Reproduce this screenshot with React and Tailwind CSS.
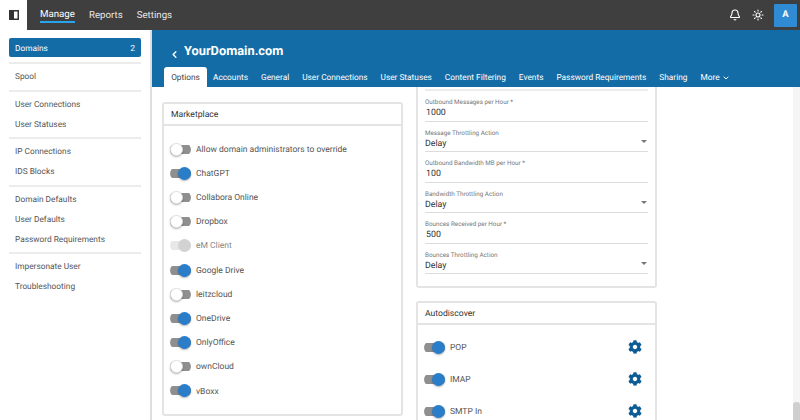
import { Bell, ChevronDown, ChevronLeft, Sun } from "lucide-react";
import { FaCog } from "react-icons/fa";

const sideGroups = [
  ["Spool"],
  ["User Connections", "User Statuses"],
  ["IP Connections", "IDS Blocks"],
  ["Domain Defaults", "User Defaults", "Password Requirements"],
  ["Impersonate User", "Troubleshooting"],
];

const tabs = ["Accounts", "General", "User Connections", "User Statuses", "Content Filtering", "Events", "Password Requirements", "Sharing"];

const marketplace = [
  ["Allow domain administrators to override", "off"],
  ["ChatGPT", "on"],
  ["Collabora Online", "off"],
  ["Dropbox", "off"],
  ["eM Client", "disabled"],
  ["Google Drive", "on"],
  ["leitzcloud", "off"],
  ["OneDrive", "on"],
  ["OnlyOffice", "on"],
  ["ownCloud", "off"],
  ["vBoxx", "on"],
];

const fields = [
  ["Outbound Messages per Hour *", "1000", false],
  ["Message Throttling Action", "Delay", true],
  ["Outbound Bandwidth MB per Hour *", "100", false],
  ["Bandwidth Throttling Action", "Delay", true],
  ["Bounces Received per Hour *", "500", false],
  ["Bounces Throttling Action", "Delay", true],
];

const Toggle = ({ state }) => {
  if (state === "on") {
    return (
      <div className="flex h-[13px] w-[21px] shrink-0 items-center justify-end rounded-full bg-[linear-gradient(#8f8f8f,#8f8f8f)] bg-[length:100%_9px] bg-center bg-no-repeat">
        <div className="h-[13px] w-[13px] rounded-full bg-[#2a7dc9] shadow-[0_1px_2px_rgba(0,0,0,0.3)]" />
      </div>
    );
  }
  if (state === "disabled") {
    return (
      <div className="flex h-[13px] w-[21px] shrink-0 items-center justify-end rounded-full bg-[linear-gradient(#e8e8e8,#e8e8e8)] bg-[length:100%_9px] bg-center bg-no-repeat">
        <div className="h-[13px] w-[13px] rounded-full bg-[#d2d2d2]" />
      </div>
    );
  }
  return (
    <div className="flex h-[13px] w-[21px] shrink-0 items-center justify-start rounded-full bg-[linear-gradient(#8f8f8f,#8f8f8f)] bg-[length:100%_9px] bg-center bg-no-repeat">
      <div className="h-[13px] w-[13px] rounded-full border border-[#e2e2e2] bg-white shadow-[0_1px_2px_rgba(0,0,0,0.3)]" />
    </div>
  );
};

const Card = ({ title, children, className = "" }) => (
  <div className={`rounded-[3px] border-2 border-[#e4e4e4] bg-white ${className}`}>
    <div className="flex h-[22px] items-center border-b-2 border-[#e4e4e4] px-[7px] pt-[3px] text-[8.6px] text-[#333]">{title}</div>
    {children}
  </div>
);

export default function App() {
  return (
    <div className="flex h-[420px] w-[800px] flex-col overflow-hidden bg-white font-['Roboto',sans-serif] [text-rendering:geometricPrecision]">
      <header className="flex h-[30px] shrink-0">
        <div className="flex w-[27px] items-center justify-center bg-white">
          <svg width="10" height="10" viewBox="0 0 10 10">
            <rect x="0.75" y="0.75" width="8.5" height="8.5" fill="none" stroke="#333" strokeWidth="1.5" />
            <rect x="0" y="0" width="5" height="10" fill="#333" />
          </svg>
        </div>
        <div className="flex flex-1 items-center bg-[#3f3f3f] pl-[13px] pr-[3px] text-[9.7px] text-[#e8e8e8]">
          <span className="border-b-2 border-[#29a3ee] pt-[2px] leading-[12px] text-white">Manage</span>
          <span className="ml-[14px] pt-[2px]">Reports</span>
          <span className="ml-[14px] pt-[2px]">Settings</span>
          <div className="ml-auto flex items-center">
            <Bell size={12} strokeWidth={2.2} className="text-white" />
            <Sun size={12} strokeWidth={2.2} className="ml-[11px] text-white" />
            <div className="ml-[10px] flex h-[23px] w-[23px] items-center justify-center rounded-[1px] bg-[#2f8bd3] text-[9.5px] font-bold text-white">A</div>
          </div>
        </div>
      </header>

      <div className="flex min-h-0 flex-1">
        <aside className="flex w-[152px] shrink-0 flex-col border-r-2 border-[#dedede] px-[9px] pt-[8px] text-[8.3px] text-[#555]">
          <div className="mb-[3px] flex h-[19px] items-center justify-between rounded-[2px] bg-[#146ca6] px-[6px] pt-[3px] text-white">
            <span>Domains</span>
            <span className="text-[8.5px]">2</span>
          </div>
          {sideGroups.map((group, i) => (
            <div key={i} className="mt-[2px] border-t-2 border-[#ececec] pb-[0.5px] pt-[3px]">
              {group.map((item) => (
                <div key={item} className="flex h-[20px] items-center px-[6px] pt-[1px]">{item}</div>
              ))}
            </div>
          ))}
        </aside>

        <div className="flex min-w-0 flex-1 flex-col">
          <div className="h-[57px] shrink-0 bg-[#146ca6] text-white">
            <div className="flex h-[37px] items-end pb-[7px] pl-[17px]">
              <ChevronLeft size={11} strokeWidth={3} />
              <span className="ml-[4px] text-[12.8px] font-bold leading-[16px]">YourDomain.com</span>
            </div>
            <div className="flex h-[20px] items-center gap-[13px] pl-[12px] text-[8.3px]">
              <div className="-mr-[7px] flex h-[20px] w-[43px] items-center justify-center rounded-t-[3px] bg-white pt-[3px] text-[#444]">Options</div>
              {tabs.map((tab) => (
                <span key={tab} className="pt-[3px]">{tab}</span>
              ))}
              <span className="flex items-center gap-[2px] pt-[2px]">More <ChevronDown size={8} strokeWidth={3} /></span>
            </div>
          </div>

          <div className="flex min-h-0 flex-1">
            <main className="flex flex-1 items-start gap-[13px] overflow-hidden pl-[10px]">
              <Card title="Marketplace" className="mt-[15px] w-[241px]">
                <div className="flex flex-col px-[6px] pb-[11px] pt-[11px]">
                  {marketplace.map(([name, state]) => (
                    <div key={name} className="flex h-[24.2px] items-center gap-[5px] text-[8.5px] text-[#555]">
                      <Toggle state={state} />
                      <span className={state === "disabled" ? "pt-[2px] text-[#888]" : "pt-[2px]"}>{name}</span>
                    </div>
                  ))}
                </div>
              </Card>

              <div className="flex w-[241px] flex-col">
                <div className="rounded-b-[3px] border-x-2 border-b-2 border-[#e4e4e4] bg-white px-[7px] pb-[12px]">
                  <div className="h-[4px] border-b-2 border-[#ececec]" />
                  {fields.map(([label, value, select]) => (
                    <div key={label} className="relative h-[30.5px] border-b border-[#dcdcdc] pt-[7px]">
                      <div className="text-[6.3px] leading-[9px] text-[#777]">{label}</div>
                      <div className={`text-[8.8px] leading-[13px] text-[#333] ${select ? "" : "pl-[1px]"}`}>{value}</div>
                      {select && <div className="absolute bottom-[8px] right-[1px] h-0 w-0 border-x-[3px] border-t-[3px] border-x-transparent border-t-[#777]" />}
                    </div>
                  ))}
                </div>
                <Card title="Autodiscover" className="mt-[13px]">
                  <div className="flex flex-col px-[6px] pt-[6px]">
                    {["POP", "IMAP", "SMTP In"].map((name) => (
                      <div key={name} className="flex h-[32px] items-center gap-[5px] text-[8.5px] text-[#555]">
                        <Toggle state="on" />
                        <span className="pt-[3px]">{name}</span>
                        <FaCog size={14} className="ml-auto mr-[7px] text-[#0e5c94]" />
                      </div>
                    ))}
                  </div>
                </Card>
              </div>
            </main>

            <div className="flex w-[7px] shrink-0 flex-col justify-end bg-[#f5f5f5]">
              <div className="h-[18px] rounded-t-[3px] bg-[#cfcfcf]" />
            </div>
          </div>
        </div>
      </div>
    </div>
  );
}
